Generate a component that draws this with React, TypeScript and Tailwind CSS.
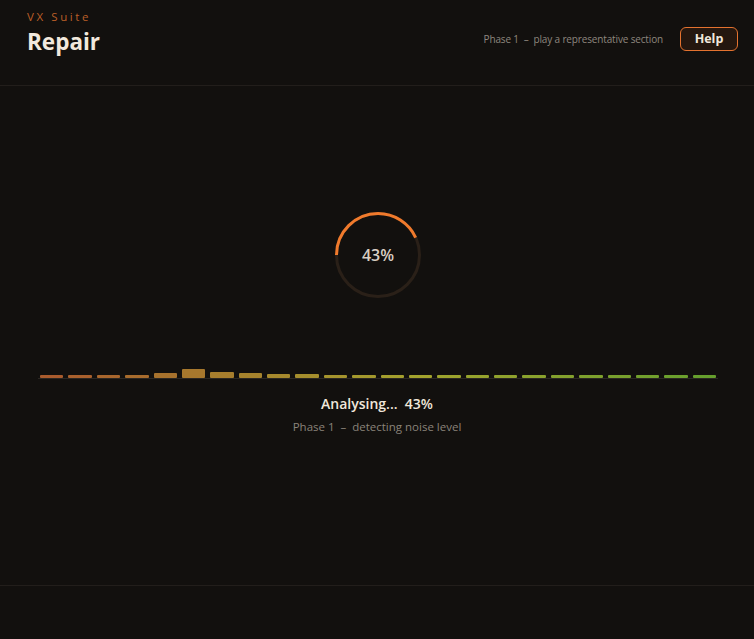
import React from "react";

const BAR_HEIGHTS = [3, 3, 3, 3, 5, 9, 6, 5, 4, 4, 3, 3, 3, 3, 3, 3, 3, 3, 3, 3, 3, 3, 3, 3];

function barColor(i: number) {
  const t = i / 23;
  const hue = 22 + t * 68;
  const sat = 58 - t * 2;
  const light = 42 - t * 2;
  return `hsl(${hue}, ${sat}%, ${light}%)`;
}

export default function App() {
  const pct = 0.43;
  const r = 41.5;
  const c = 2 * Math.PI * r;
  return (
    <div
      className="w-full h-[639px] bg-[#12100e] flex flex-col overflow-hidden"
      style={{ fontFamily: '"Open Sans", "Liberation Sans", sans-serif' }}
    >
      <header className="h-[86px] shrink-0 border-b border-[#221e1b] flex items-start justify-between pl-[27px] pr-[16px]">
        <div className="flex flex-col pt-[10px]">
          <div className="text-[11.5px] leading-[14px] tracking-[2.6px] text-[#bb5f28]">VX Suite</div>
          <div className="text-[22.5px] leading-[30px] font-bold text-[#f2e9dd] mt-[3px]">Repair</div>
        </div>
        <div className="flex items-center gap-[17px] pt-[27px]">
          <div className="text-[10px] leading-[24px] tracking-[-0.15px] text-[#8e877e] whitespace-pre">Phase 1  –  play a representative section</div>
          <button className="h-[24px] w-[58px] rounded-[6px] border border-[#e4722f] bg-[#24170f] text-[12.5px] font-bold text-[#f1e7db] flex items-center justify-center">
            Help
          </button>
        </div>
      </header>

      <main className="h-[499px] shrink-0 flex flex-col items-center">
        <div className="relative mt-[124px] w-[90px] h-[90px] ml-[2px]">
          <svg width="90" height="90" viewBox="0 0 90 90">
            <circle cx="45" cy="45" r={r} fill="none" stroke="#2a2018" strokeWidth="3" />
            <circle
              cx="45"
              cy="45"
              r={r}
              fill="none"
              stroke="#f07a2c"
              strokeWidth="3"
              strokeDasharray={`${c * pct} ${c}`}
              transform="rotate(180 45 45)"
            />
          </svg>
          <div className="absolute inset-0 flex items-center justify-center text-[16px] font-semibold text-[#d9cfc3]">
            43%
          </div>
        </div>

        <div className="mt-[70px] self-stretch pl-[38px] pr-[36px]">
          <div className="flex items-end gap-[5px] h-[9px] border-b border-[#2a2622] px-[2px]">
            {BAR_HEIGHTS.map((h, i) => (
              <div
                key={i}
                className="flex-1 rounded-[1px]"
                style={{ height: `${h}px`, backgroundColor: barColor(i) }}
              />
            ))}
          </div>
        </div>

        <div className="mt-[15px] text-[14px] leading-[20px] font-semibold text-[#f0e7db] whitespace-pre">
          Analysing...  43%
        </div>
        <div className="mt-[5px] text-[11.5px] leading-[16px] text-[#8a837a] whitespace-pre">
          Phase 1  –  detecting noise level
        </div>
      </main>

      <footer className="flex-1 border-t border-[#221e1b]" />
    </div>
  );
}
